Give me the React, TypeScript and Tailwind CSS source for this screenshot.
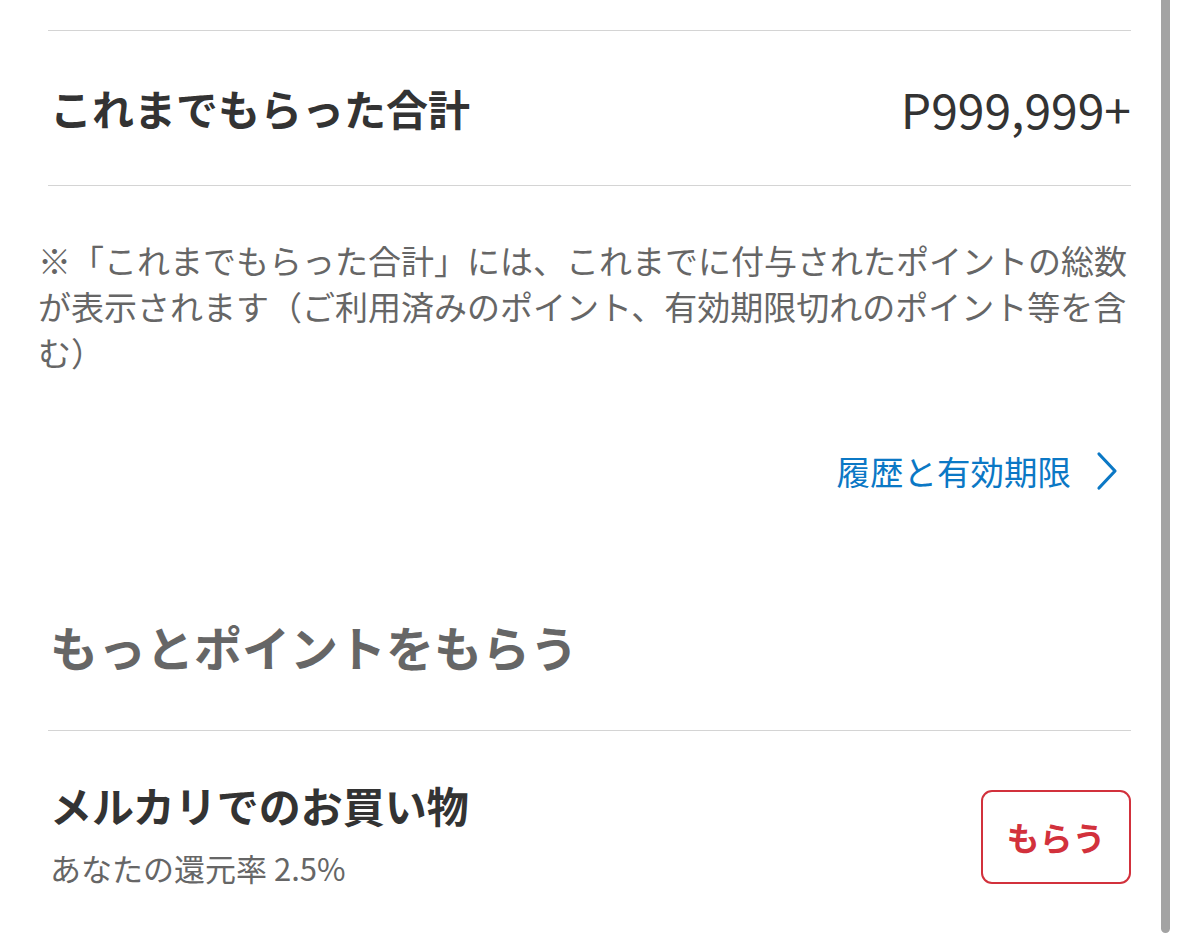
import React from "react";

export default function App() {
  const jp = { fontFamily: '"Noto Sans CJK JP", "Noto Sans", sans-serif' };
  return (
    <div className="relative w-[1179px] h-[939px] overflow-hidden bg-white" style={jp}>
      <div className="pt-[30px]">
        <div className="mx-[48px] w-[1083px] border-t-[1.5px] border-[#d4d4d4]" />
        <div className="mx-[48px] w-[1083px] h-[155px] flex items-center justify-between border-b-[1.5px] border-[#d4d4d4]">
          <span className="text-[42px] font-bold text-[#333333] leading-none pl-[2px]">これまでもらった合計</span>
          <span className="text-[48px] text-[#333333] leading-none">P999,999+</span>
        </div>
        <p className="pl-[38px] w-[1160px] mt-[51px] text-[33px] leading-[46px] text-[#666666] whitespace-nowrap">
          ※「これまでもらった合計」には、これまでに付与されたポイントの総数
          <br />
          が表示されます（ご利用済みのポイント、有効期限切れのポイント等を含
          <br />
          む）
        </p>
        <div className="mt-[76px] mr-[60px] flex justify-end items-center gap-[24px]">
          <span className="text-[33.5px] leading-none text-[#0b78c5]">履歴と有効期限</span>
          <svg width="24" height="40" viewBox="0 0 24 40" fill="none">
            <path d="M4 3 L20 20 L4 37" stroke="#0b78c5" strokeWidth="3.2" strokeLinecap="round" strokeLinejoin="round" />
          </svg>
        </div>
        <h2 className="mt-[131px] ml-[50px] text-[48px] font-bold leading-none text-[#666666]">もっとポイントをもらう</h2>
        <div className="mt-[60px] mx-[48px] w-[1083px] border-t-[1.5px] border-[#d4d4d4]" />
        <div className="mx-[48px] w-[1083px] flex items-start justify-between">
          <div className="pt-[53px] pl-[2px] flex flex-col">
            <span className="text-[42px] font-bold text-[#333333] leading-none">メルカリでのお買い物</span>
            <span className="mt-[26px] text-[31px] text-[#666666] leading-none">あなたの還元率 2.5%</span>
          </div>
          <div className="mt-[59px] w-[150px] h-[94px] rounded-[11px] border-[2.5px] border-[#d2313c] flex items-center justify-center">
            <span className="text-[33px] font-bold text-[#d2313c] leading-none">もらう</span>
          </div>
        </div>
      </div>
      <div className="absolute left-[1161px] top-0 w-[9px] h-[933px] bg-[#a3a3a3] rounded-b-full" />
    </div>
  );
}
